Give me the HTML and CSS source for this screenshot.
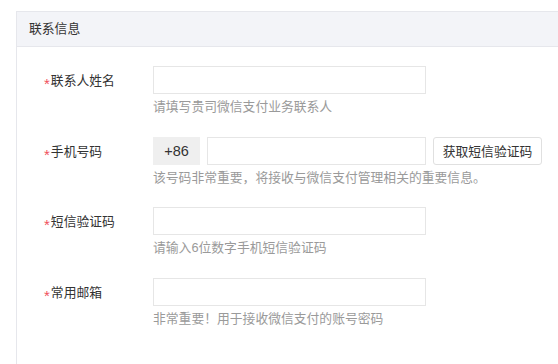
FILE: index.html
```html
<!DOCTYPE html>
<html lang="zh-CN">
<head>
  <meta charset="UTF-8" />
  <meta name="viewport" content="width=device-width, initial-scale=1.0"/>
  <title>联系信息</title>
  <link rel="stylesheet" href="styles.css">
</head>
<body>
  <div class="panel">
    <div class="panel-head">联系信息</div>

    <div class="form">
      <div class="row">
        <label class="label"><span class="req">*</span>联系人姓名</label>
        <div class="field">
          <div class="line">
            <input class="input" type="text">
          </div>
          <div class="hint">请填写贵司微信支付业务联系人</div>
        </div>
      </div>

      <div class="row">
        <label class="label"><span class="req">*</span>手机号码</label>
        <div class="field">
          <div class="line">
            <span class="prefix">+86</span>
            <input class="input input-phone" type="text">
            <button class="btn">获取短信验证码</button>
          </div>
          <div class="hint">该号码非常重要，将接收与微信支付管理相关的重要信息。</div>
        </div>
      </div>

      <div class="row">
        <label class="label"><span class="req">*</span>短信验证码</label>
        <div class="field">
          <div class="line">
            <input class="input" type="text">
          </div>
          <div class="hint">请输入6位数字手机短信验证码</div>
        </div>
      </div>

      <div class="row">
        <label class="label"><span class="req">*</span>常用邮箱</label>
        <div class="field">
          <div class="line">
            <input class="input" type="text">
          </div>
          <div class="hint">非常重要！用于接收微信支付的账号密码</div>
        </div>
      </div>
    </div>
  </div>
</body>
</html>
```

FILE: styles.css
```css
* {
  box-sizing: border-box;
}

html,
body {
  height: 100%;
}

body {
  margin: 0;
  background-color: #ffffff;
  color: #333;
  font-family: "Liberation Sans", "Noto Sans CJK SC", sans-serif;
  font-size: 12.8px;
  overflow: hidden;
}

.panel {
  margin: 11px 0 0 16px;
  height: calc(100% - 11px);
  border: 1px solid #e6e7ec;
  border-right: none;
  border-bottom: none;
}

.panel-head {
  height: 35px;
  line-height: 34px;
  padding-left: 12px;
  background-color: #f3f4f8;
  border-bottom: 1px solid #e6e7ec;
  color: #333;
}

.form {
  padding: 19px 0 0 27px;
}

.row {
  display: flex;
  margin-bottom: 20.7px;
}

.label {
  width: 109px;
  line-height: 28px;
  color: #333;
}

.req {
  display: inline-block;
  color: #f0505a;
  font-size: 15px;
  margin-right: 1px;
  transform: translateY(4px);
}

.line {
  display: flex;
  gap: 7px;
}

.input {
  width: 273px;
  height: 28px;
  border: 1px solid #e6e6e6;
  border-radius: 0;
  background-color: #fff;
  margin: 0;
  padding: 0 8px;
  font: inherit;
  outline: none;
}

.input-phone {
  width: 219px;
}

.prefix {
  width: 47px;
  height: 28px;
  line-height: 28px;
  text-align: center;
  background-color: #efefef;
  color: #333;
  font-size: 14.5px;
}

.btn {
  width: 109px;
  height: 28px;
  margin: 0;
  padding: 0;
  border: 1px solid #e0e0e0;
  border-radius: 3px;
  background-color: #fff;
  color: #333;
  font: inherit;
  cursor: pointer;
}

.hint {
  margin-top: 4px;
  line-height: 18px;
  color: #9a9a9a;
}
```
